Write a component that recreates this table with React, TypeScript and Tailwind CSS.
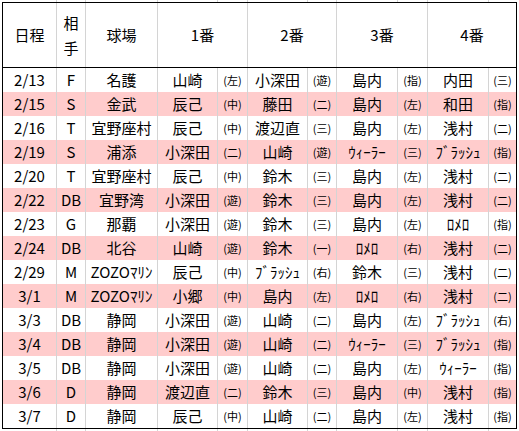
type Slot = [string, string];

interface Game {
  date: string;
  opp: string;
  park: string;
  order: Slot[];
}

const games: Game[] = [
  { date: "2/13", opp: "F", park: "名護", order: [["山崎", "左"], ["小深田", "遊"], ["島内", "指"], ["内田", "三"]] },
  { date: "2/15", opp: "S", park: "金武", order: [["辰己", "中"], ["藤田", "二"], ["島内", "左"], ["和田", "指"]] },
  { date: "2/16", opp: "T", park: "宜野座村", order: [["辰己", "中"], ["渡辺直", "三"], ["島内", "左"], ["浅村", "二"]] },
  { date: "2/19", opp: "S", park: "浦添", order: [["小深田", "二"], ["山崎", "遊"], ["ｳｨｰﾗｰ", "三"], ["ﾌﾞﾗｯｼｭ", "指"]] },
  { date: "2/20", opp: "T", park: "宜野座村", order: [["辰己", "中"], ["鈴木", "三"], ["島内", "左"], ["浅村", "二"]] },
  { date: "2/22", opp: "DB", park: "宜野湾", order: [["小深田", "遊"], ["鈴木", "三"], ["島内", "左"], ["浅村", "二"]] },
  { date: "2/23", opp: "G", park: "那覇", order: [["小深田", "遊"], ["鈴木", "三"], ["島内", "左"], ["ﾛﾒﾛ", "指"]] },
  { date: "2/24", opp: "DB", park: "北谷", order: [["山崎", "遊"], ["鈴木", "一"], ["ﾛﾒﾛ", "右"], ["浅村", "二"]] },
  { date: "2/29", opp: "M", park: "ZOZOﾏﾘﾝ", order: [["辰己", "中"], ["ﾌﾞﾗｯｼｭ", "右"], ["鈴木", "三"], ["浅村", "二"]] },
  { date: "3/1", opp: "M", park: "ZOZOﾏﾘﾝ", order: [["小郷", "中"], ["島内", "左"], ["ﾛﾒﾛ", "右"], ["浅村", "二"]] },
  { date: "3/3", opp: "DB", park: "静岡", order: [["小深田", "遊"], ["山崎", "二"], ["島内", "左"], ["ﾌﾞﾗｯｼｭ", "右"]] },
  { date: "3/4", opp: "DB", park: "静岡", order: [["小深田", "遊"], ["山崎", "二"], ["ｳｨｰﾗｰ", "三"], ["ﾌﾞﾗｯｼｭ", "指"]] },
  { date: "3/5", opp: "DB", park: "静岡", order: [["小深田", "遊"], ["山崎", "二"], ["島内", "左"], ["ｳｨｰﾗｰ", "指"]] },
  { date: "3/6", opp: "D", park: "静岡", order: [["渡辺直", "二"], ["鈴木", "三"], ["島内", "中"], ["浅村", "指"]] },
  { date: "3/7", opp: "D", park: "静岡", order: [["辰己", "中"], ["山崎", "二"], ["島内", "左"], ["浅村", "指"]] },
];

const cols = "grid grid-cols-[54px_29px_72px_60px_30px_60px_29px_61px_30px_61px_27px]";
const line = "border-r border-[#d4d4d4]";

function GridStrip() {
  return (
    <div className={`${cols} ml-[3px] h-[2px]`}>
      {Array.from({ length: 11 }).map((_, i) => (
        <div key={i} className={i < 10 ? line : ""} />
      ))}
    </div>
  );
}

export default function App() {
  return (
    <div
      className="h-[431px] w-[519px] overflow-hidden bg-white text-black"
      style={{ fontFamily: '"Noto Sans CJK JP", "Noto Sans", sans-serif' }}
    >
      <GridStrip />
      <div className="ml-[2px] w-[515px] border border-black">
        {/* header */}
        <div className={`${cols} h-[65px] border-b border-black text-[15px]`}>
          <div className={`${line} flex items-center justify-center`}>日程</div>
          <div className={`${line} flex flex-col items-center justify-center leading-[25px]`}>
            <span>相</span>
            <span>手</span>
          </div>
          <div className={`${line} flex items-center justify-center`}>球場</div>
          {["1番", "2番", "3番", "4番"].map((h, i) => (
            <div
              key={h}
              className={`${i < 3 ? line : ""} col-span-2 flex items-center justify-center`}
            >
              {h}
            </div>
          ))}
        </div>

        {/* rows */}
        {games.map((g, r) => (
          <div
            key={g.date}
            className={`${cols} h-[24px] text-[15px] leading-[24px] ${r % 2 === 1 ? "bg-[#ffcccc]" : "bg-white"}`}
          >
            <div className={`${line} text-center`}>{g.date}</div>
            <div className={`${line} text-center`}>{g.opp}</div>
            <div className={`${line} text-center whitespace-nowrap`}>{g.park}</div>
            {g.order.map(([name, pos], i) => (
              <div key={i} className="contents">
                <div className={`${line} text-center whitespace-nowrap`}>{name}</div>
                <div className={`${i < 3 ? line : ""} text-center text-[11px] whitespace-nowrap`}>
                  ({pos})
                </div>
              </div>
            ))}
          </div>
        ))}
      </div>
      <GridStrip />
    </div>
  );
}
